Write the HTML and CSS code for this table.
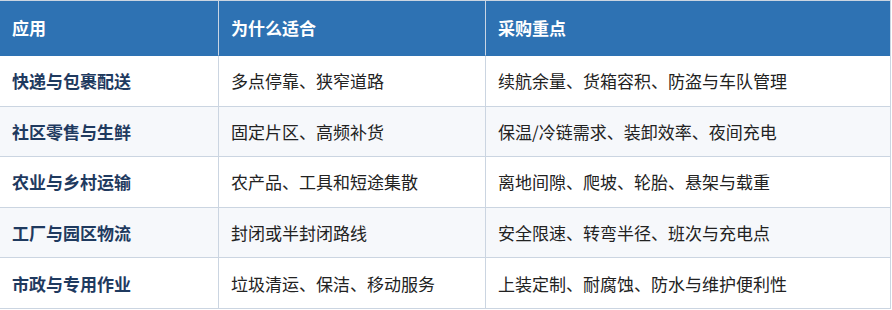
FILE: index.html
```html
<!DOCTYPE html>
<html lang="zh">
<head>
<meta charset="utf-8">
<link rel="stylesheet" href="styles.css">
</head>
<body>
<div class="table">
  <div class="row head">
    <div class="cell">应用</div>
    <div class="cell">为什么适合</div>
    <div class="cell">采购重点</div>
  </div>
  <div class="row">
    <div class="cell name">快递与包裹配送</div>
    <div class="cell">多点停靠、狭窄道路</div>
    <div class="cell">续航余量、货箱容积、防盗与车队管理</div>
  </div>
  <div class="row alt">
    <div class="cell name">社区零售与生鲜</div>
    <div class="cell">固定片区、高频补货</div>
    <div class="cell">保温/冷链需求、装卸效率、夜间充电</div>
  </div>
  <div class="row">
    <div class="cell name">农业与乡村运输</div>
    <div class="cell">农产品、工具和短途集散</div>
    <div class="cell">离地间隙、爬坡、轮胎、悬架与载重</div>
  </div>
  <div class="row alt">
    <div class="cell name">工厂与园区物流</div>
    <div class="cell">封闭或半封闭路线</div>
    <div class="cell">安全限速、转弯半径、班次与充电点</div>
  </div>
  <div class="row">
    <div class="cell name">市政与专用作业</div>
    <div class="cell">垃圾清运、保洁、移动服务</div>
    <div class="cell">上装定制、耐腐蚀、防水与维护便利性</div>
  </div>
</div>
</body>
</html>
```

FILE: styles.css
```css
html, body {
  margin: 0;
  padding: 0;
  background: #ffffff;
}
body {
  font-family: "Noto Sans CJK SC", "Noto Sans", sans-serif;
  font-size: 17px;
  color: #222222;
}
.table {
  width: 891px;
  border-top: 1px solid #cbd5e1;
  border-right: 1px solid #cbd5e1;
  box-sizing: border-box;
}
.row {
  display: grid;
  grid-template-columns: 218px 267px 405px;
  height: 50.6px;
}
.row.alt {
  background: #f6f8fb;
}
.cell {
  display: flex;
  align-items: center;
  padding: 0 12px;
  border-bottom: 1px solid #cbd5e1;
  border-left: 1px solid #cbd5e1;
  box-sizing: border-box;
  white-space: nowrap;
  line-height: 1;
}
.cell:first-child {
  border-left: none;
}
.row.head {
  height: 55px;
  background: #2e72b3;
  color: #ffffff;
  font-weight: 700;
}
.row.head .cell {
  padding-bottom: 1px;
  border-bottom-color: #2e72b3;
  border-left-color: #c9d5e4;
}
.name {
  font-weight: 700;
  color: #1f3a5f;
}
```
